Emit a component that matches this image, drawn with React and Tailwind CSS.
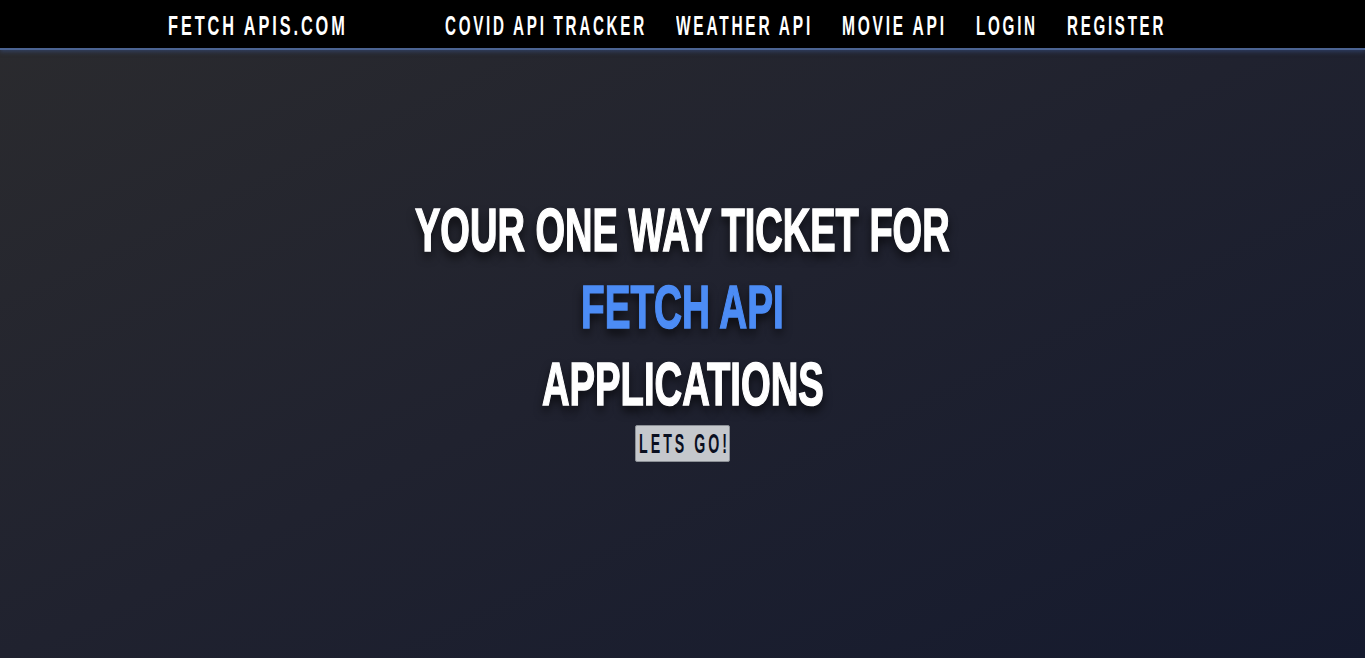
import React, { useLayoutEffect, useRef, useState } from "react";

const font = {
  fontFamily: '"Liberation Sans", Arial, sans-serif',
};

// squeezes a line of text to the width of its box (stands in for a condensed display face)
function Fit({ className, children }) {
  const box = useRef(null);
  const txt = useRef(null);
  const [s, setS] = useState(1);

  useLayoutEffect(() => {
    const measure = () => {
      const w = box.current.clientWidth;
      const n = txt.current.offsetWidth;
      if (w && n) setS(w / n);
    };
    measure();
    if (document.fonts) document.fonts.ready.then(measure);
  }, []);

  return (
    <span ref={box} className={`inline-block whitespace-nowrap ${className}`}>
      <span
        ref={txt}
        className="inline-block origin-left"
        style={{ transform: `scaleX(${s})` }}
      >
        {children}
      </span>
    </span>
  );
}

const links = [
  ["COVID API TRACKER", "w-[202px]"],
  ["WEATHER API", "w-[137px]"],
  ["MOVIE API", "w-[105px]"],
  ["LOGIN", "w-[62px]"],
  ["REGISTER", "w-[99px]"],
];

export default function App() {
  return (
    <div
      className="h-[658px] flex flex-col bg-gradient-to-br from-[#2b2b2e] via-[#20222f] to-[#151a2e] overflow-hidden"
      style={font}
    >
      <nav className="h-[50px] shrink-0 pt-[3px] bg-black border-b-2 border-[#4b6392] shadow-[0_2px_4px_rgba(60,85,140,0.5)] flex items-center">
        <Fit className="ml-[168px] w-[180px] text-white font-bold text-[28px] tracking-[5px] leading-none">
          FETCH APIS.COM
        </Fit>
        <ul className="flex gap-[29px] ml-[97px]">
          {links.map(([l, w]) => (
            <li key={l} className="flex">
              <Fit className={`${w} text-white font-bold text-[28px] tracking-[5px] leading-none`}>
                {l}
              </Fit>
            </li>
          ))}
        </ul>
      </nav>
      <main className="flex-1 flex flex-col items-center pt-[142px]">
        <h1 className="flex flex-col items-center text-white font-bold text-[61px] leading-[77px] [text-shadow:0_6px_12px_rgba(0,0,0,0.7)]">
          <Fit className="w-[535px] [-webkit-text-stroke:1.5px_#ffffff]">YOUR ONE WAY TICKET FOR</Fit>
          <Fit className="w-[203px] [-webkit-text-stroke:1.5px_#4c8cf5] text-[#4c8cf5]">FETCH API</Fit>
          <Fit className="w-[282px] [-webkit-text-stroke:1.5px_#ffffff]">APPLICATIONS</Fit>
        </h1>
        <button className="mt-[2px] w-[95px] h-[37px] flex items-center justify-center bg-[#c5c8cc] border border-[#8c9096] rounded-[2px] text-[#0a0f1f] font-bold text-[28px] leading-none">
          <Fit className="w-[91px] ml-[3px] tracking-[6px]">LETS GO!</Fit>
        </button>
      </main>
    </div>
  );
}
